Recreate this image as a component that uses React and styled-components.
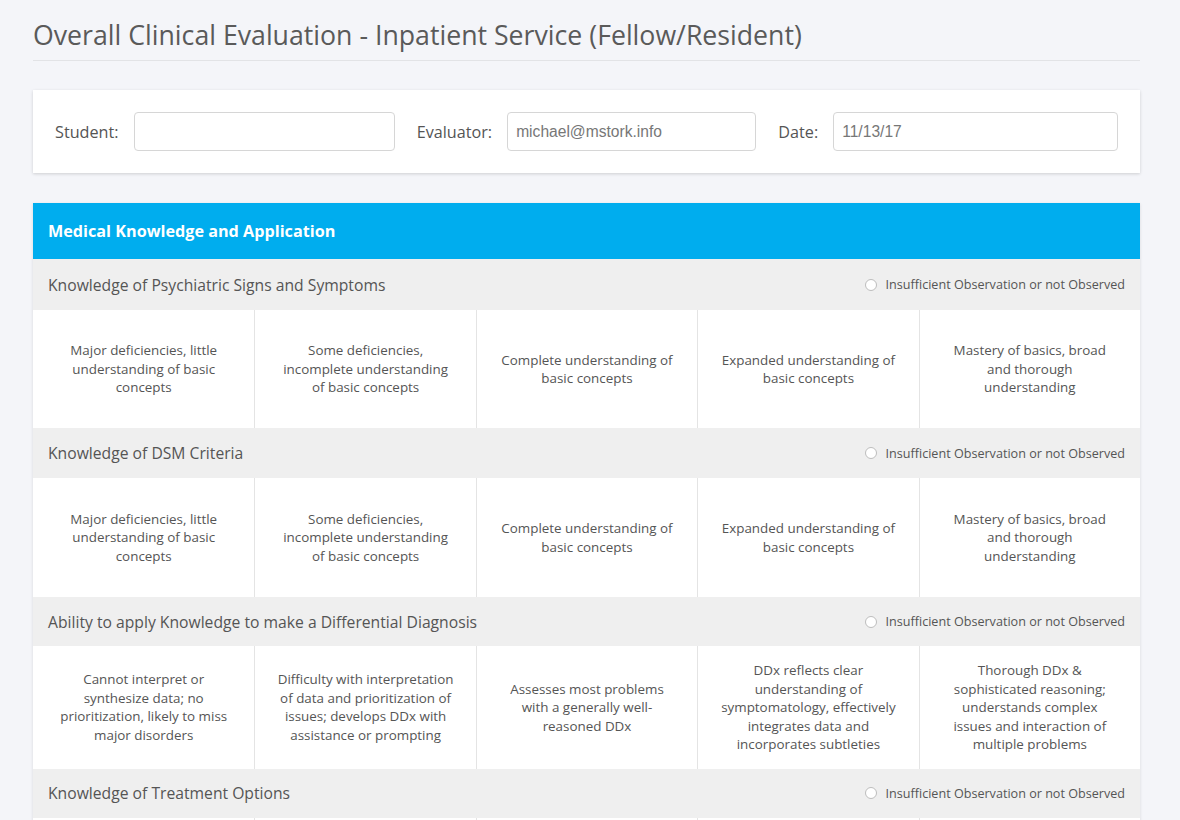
import React from "react";
import styled, { createGlobalStyle } from "styled-components";

const Global = createGlobalStyle`
  html, body { margin: 0; padding: 0; background: #f4f5f9; }
  body { font-family: "Open Sans", "Liberation Sans", sans-serif; color: #555; }
  * { box-sizing: border-box; }
`;

const Page = styled.div`
  width: 1107px;
  margin-left: 33px;
  padding-top: 17px;
`;

const Title = styled.h1`
  margin: 0;
  font-size: 26.7px;
  font-weight: 400;
  line-height: 36px;
  color: #5a5a5a;
  padding-bottom: 7px;
  border-bottom: 1px solid #e2e3e6;
`;

const InfoCard = styled.div`
  margin-top: 29px;
  background: #fff;
  box-shadow: 0 1px 3px rgba(0, 0, 0, 0.16);
  padding: 22px;
  display: grid;
  grid-template-columns: repeat(3, 1fr);
  gap: 22px;
`;

const Field = styled.label`
  display: flex;
  align-items: center;
  gap: 15px;
`;

const FieldLabel = styled.span`
  font-size: 16.2px;
  color: #555;
  white-space: nowrap;
`;

const Input = styled.input`
  flex: 1;
  min-width: 0;
  height: 39px;
  border: 1px solid #d6d6d6;
  border-radius: 4px;
  padding: 0 8px;
  font-family: "Liberation Sans", Arial, sans-serif;
  font-size: 15.6px;
  color: #777;
  background: #fff;
  outline: none;
`;

const Section = styled.section`
  margin-top: 30px;
  background: #fff;
  box-shadow: 0 1px 3px rgba(0, 0, 0, 0.12);
`;

const SectionHeader = styled.div`
  background: #00adee;
  color: #fff;
  font-size: 16.2px;
  font-weight: 700;
  height: 56px;
  display: flex;
  align-items: center;
  padding: 0 15px;
`;

const RowHeader = styled.div`
  background: #efefef;
  height: ${(p) => p.$h || 50}px;
  display: flex;
  align-items: center;
  justify-content: space-between;
  padding: 0 15px;
`;

const RowTitle = styled.span`
  font-size: 15.7px;
  color: #555;
`;

const NotObserved = styled.label`
  display: flex;
  align-items: center;
  gap: 9px;
  font-size: 12.6px;
  color: #555;
`;

const Radio = styled.span`
  width: 12px;
  height: 12px;
  border-radius: 50%;
  border: 1px solid #bdbdbd;
  background: #fff;
  display: inline-block;
`;

const Scale = styled.div`
  display: grid;
  grid-template-columns: repeat(5, 1fr);
`;

const Cell = styled.div`
  min-height: ${(p) => p.$min || 118}px;
  padding: 15px 22.2px;
  display: flex;
  align-items: center;
  justify-content: center;
  text-align: center;
  font-size: 13.4px;
  line-height: 18.5px;
  color: #555;
  border-left: 1px solid #e4e4e4;
  &:first-child { border-left: none; }
`;

const basic = [
  "Major deficiencies, little understanding of basic concepts",
  "Some deficiencies, incomplete understanding of basic concepts",
  "Complete understanding of basic concepts",
  "Expanded understanding of basic concepts",
  "Mastery of basics, broad and thorough understanding",
];

const items = [
  { title: "Knowledge of Psychiatric Signs and Symptoms", h: 51, min: 118, cells: basic },
  { title: "Knowledge of DSM Criteria", h: 50, min: 119, cells: basic },
  {
    title: "Ability to apply Knowledge to make a Differential Diagnosis",
    h: 49,
    min: 118,
    cells: [
      "Cannot interpret or synthesize data; no prioritization, likely to miss major disorders",
      "Difficulty with interpretation of data and prioritization of issues; develops DDx with assistance or prompting",
      "Assesses most problems with a generally well-reasoned DDx",
      "DDx reflects clear understanding of symptomatology, effectively integrates data and incorporates subtleties",
      "Thorough DDx & sophisticated reasoning; understands complex issues and interaction of multiple problems",
    ],
  },
  { title: "Knowledge of Treatment Options", h: 49, min: 118, cells: basic },
];

export default function App() {
  return (
    <>
      <Global />
      <Page>
        <Title>Overall Clinical Evaluation - Inpatient Service (Fellow/Resident)</Title>
        <InfoCard>
          <Field>
            <FieldLabel>Student:</FieldLabel>
            <Input defaultValue="" />
          </Field>
          <Field>
            <FieldLabel>Evaluator:</FieldLabel>
            <Input defaultValue="michael@mstork.info" />
          </Field>
          <Field>
            <FieldLabel>Date:</FieldLabel>
            <Input defaultValue="11/13/17" />
          </Field>
        </InfoCard>
        <Section>
          <SectionHeader>Medical Knowledge and Application</SectionHeader>
          {items.map((it) => (
            <div key={it.title}>
              <RowHeader $h={it.h}>
                <RowTitle>{it.title}</RowTitle>
                <NotObserved>
                  <Radio />
                  Insufficient Observation or not Observed
                </NotObserved>
              </RowHeader>
              <Scale>
                {it.cells.map((c, i) => (
                  <Cell key={i} $min={it.min}>{c}</Cell>
                ))}
              </Scale>
            </div>
          ))}
        </Section>
      </Page>
    </>
  );
}
